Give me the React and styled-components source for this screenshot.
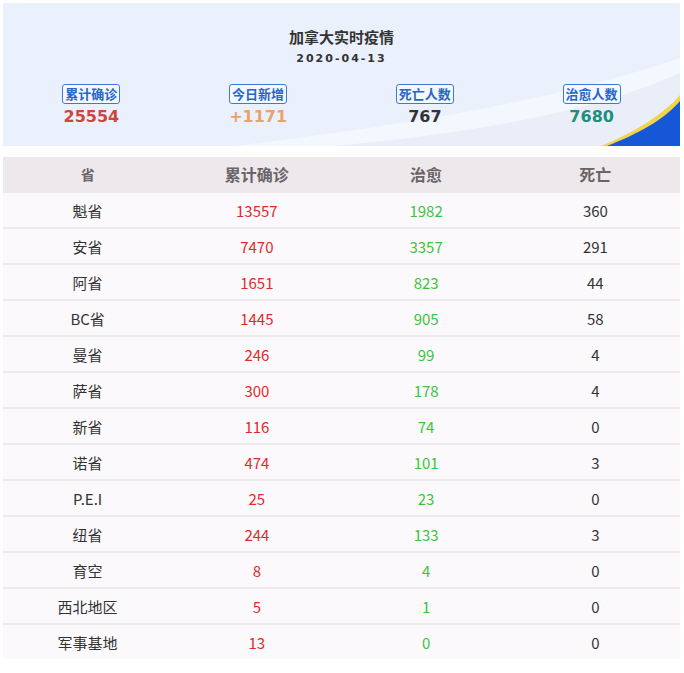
import React from 'react';
import styled, { createGlobalStyle } from 'styled-components';

const GlobalStyle = createGlobalStyle`
  body { margin: 0; background: #fff; font-family: "Noto Sans CJK SC", "Noto Sans", sans-serif; }
`

const stats = [
  { label: '累计确诊', value: '25554', color: '#d0453a' },
  { label: '今日新增', value: '+1171', color: '#e8a468' },
  { label: '死亡人数', value: '767', color: '#333' },
  { label: '治愈人数', value: '7680', color: '#1e8f7a' },
]

const rows = [
  ['魁省', 13557, 1982, 360],
  ['安省', 7470, 3357, 291],
  ['阿省', 1651, 823, 44],
  ['BC省', 1445, 905, 58],
  ['曼省', 246, 99, 4],
  ['萨省', 300, 178, 4],
  ['新省', 116, 74, 0],
  ['诺省', 474, 101, 3],
  ['P.E.I', 25, 23, 0],
  ['纽省', 244, 133, 3],
  ['育空', 8, 4, 0],
  ['西北地区', 5, 1, 0],
  ['军事基地', 13, 0, 0],
]

export default function App() {
  return (
    <>
      <GlobalStyle />
      <Page>
        <Banner>
          <Wave viewBox="0 0 677 143" preserveAspectRatio="none">
            <path d="M230 143 C420 120 560 95 677 55 L677 143 Z" fill="#f3f7fe" />
            <path d="M330 143 C480 130 600 105 677 70 L677 143 Z" fill="#e9eef9" />
            <path d="M598 143 C630 130 660 112 677 92 L677 143 Z" fill="#f2d34a" />
            <path d="M604 143 C635 131 662 116 677 98 L677 143 Z" fill="#1557d6" />
          </Wave>
          <Title>加拿大实时疫情</Title>
          <DateText>2020-04-13</DateText>
          <Stats>
            {stats.map((s) => (
              <Stat key={s.label}>
                <Label>{s.label}</Label>
                <Value color={s.color}>{s.value}</Value>
              </Stat>
            ))}
          </Stats>
        </Banner>
        <Table>
          <HeadRow>
            <HeadCell size="14px">省</HeadCell>
            <HeadCell>累计确诊</HeadCell>
            <HeadCell>治愈</HeadCell>
            <HeadCell>死亡</HeadCell>
          </HeadRow>
          {rows.map((r) => (
            <Row key={r[0]}>
              <Cell>{r[0]}</Cell>
              <Cell color="#e02a2a">{r[1]}</Cell>
              <Cell color="#3cc43c">{r[2]}</Cell>
              <Cell>{r[3]}</Cell>
            </Row>
          ))}
        </Table>
      </Page>
    </>
  )
}

const Page = styled.div`
  padding: 3px 4px 0 3px;
`

const Banner = styled.div`
  position: relative;
  height: 143px;
  background: #eaf1fd;
  overflow: hidden;
  display: flex;
  flex-direction: column;
  align-items: center;
  padding-top: 24px;
  box-sizing: border-box;
`

const Wave = styled.svg`
  position: absolute;
  left: 0;
  top: 0;
  width: 100%;
  height: 100%;
`

const Title = styled.div`
  position: relative;
  font-size: 15px;
  font-weight: bold;
  color: #333;
  line-height: 20px;
`

const DateText = styled.div`
  position: relative;
  font-family: "DejaVu Sans", sans-serif;
  font-size: 11px;
  font-weight: bold;
  letter-spacing: 2px;
  color: #333;
  margin-top: 5px;
`

const Stats = styled.div`
  position: relative;
  align-self: stretch;
  display: grid;
  grid-template-columns: repeat(4, 1fr);
  margin-top: 19px;
  padding: 0 5px;
`

const Stat = styled.div`
  display: flex;
  flex-direction: column;
  align-items: center;
`

const Label = styled.div`
  font-size: 13px;
  font-weight: bold;
  color: #2766c9;
  border: 1px solid #3a7bd8;
  border-radius: 3px;
  padding: 0 2px;
  line-height: 18px;
  background: #f4f8ff;
`

const Value = styled.div`
  font-family: "DejaVu Sans", sans-serif;
  font-size: 16px;
  font-weight: bold;
  color: ${(p) => p.color};
  margin-top: 3px;
`

const Table = styled.div`
  margin-top: 11px;
`

const HeadRow = styled.div`
  display: grid;
  grid-template-columns: repeat(4, 1fr);
  height: 34px;
  background: #ede8ec;
  align-items: center;
`

const HeadCell = styled.div`
  text-align: center;
  font-size: ${(p) => p.size || '16px'};
  font-weight: bold;
  color: #6b6467;
`

const Row = styled.div`
  display: grid;
  grid-template-columns: repeat(4, 1fr);
  height: 34px;
  align-items: center;
  background: #fbf9fb;
  border-top: 2px solid #ede9ed;
`

const Cell = styled.div`
  text-align: center;
  font-size: 15px;
  color: ${(p) => p.color || '#333'};
`
